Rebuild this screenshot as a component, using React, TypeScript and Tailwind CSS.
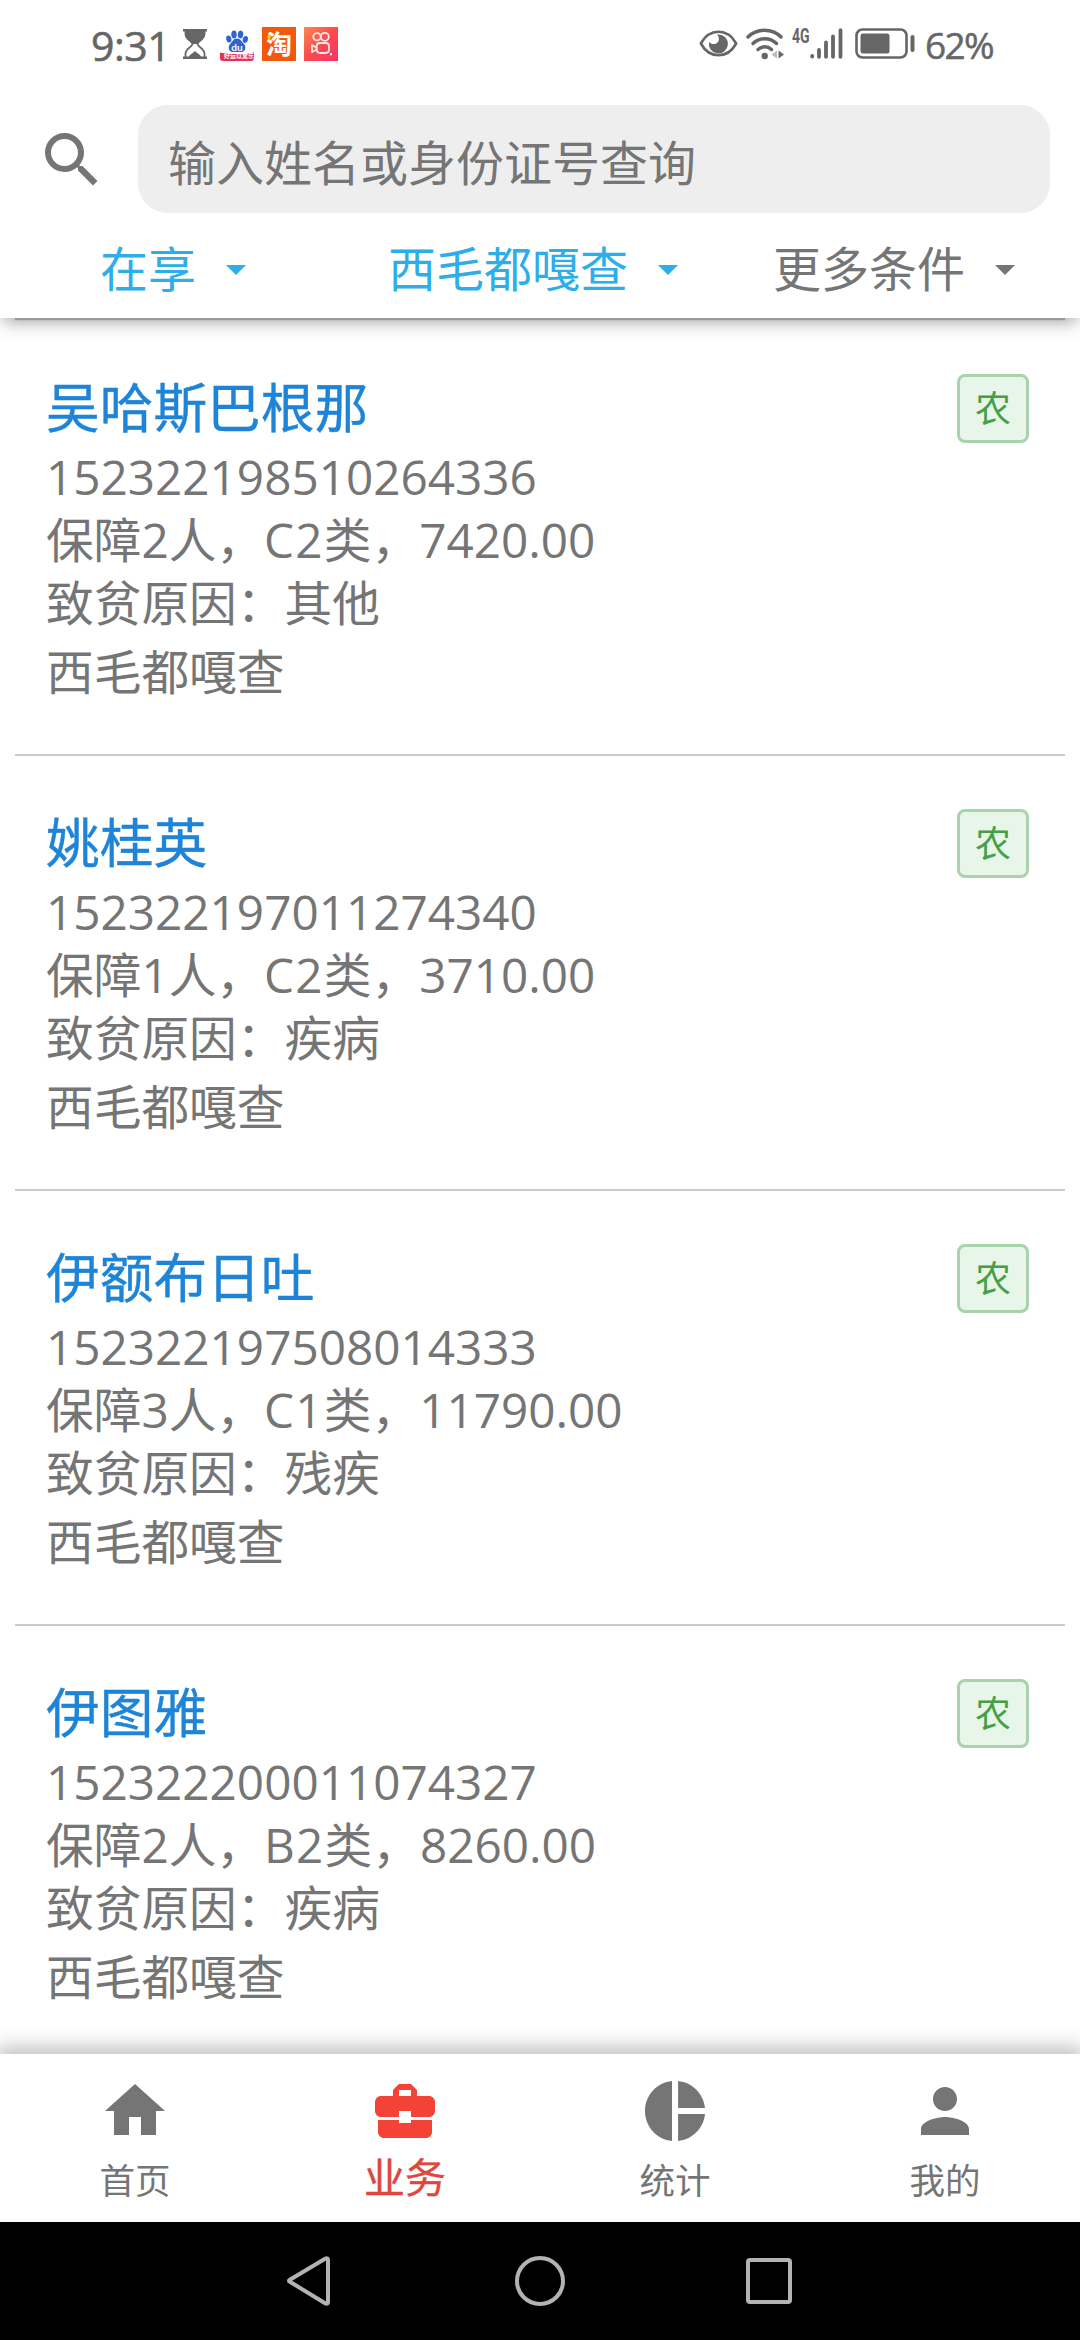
import React from 'react';

type Person = { name: string; id: string; count: number; level: string; amount: string; cause: string; village: string };

const people: Person[] = [
  { name: '吴哈斯巴根那', id: '152322198510264336', count: 2, level: 'C2', amount: '7420.00', cause: '其他', village: '西毛都嘎查' },
  { name: '姚桂英', id: '152322197011274340', count: 1, level: 'C2', amount: '3710.00', cause: '疾病', village: '西毛都嘎查' },
  { name: '伊额布日吐', id: '152322197508014333', count: 3, level: 'C1', amount: '11790.00', cause: '残疾', village: '西毛都嘎查' },
  { name: '伊图雅', id: '152322200011074327', count: 2, level: 'B2', amount: '8260.00', cause: '疾病', village: '西毛都嘎查' },
];

function Hourglass() {
  return (
    <svg className="h-[30px] w-6" viewBox="0 0 24 30" fill="none" stroke="#666" strokeWidth="1.800">
      <path d="M0 1.200h24M0 28.800h24" strokeWidth="2.400" />
      <path d="M2.500 1v4c0 6 7 7 7 10s-7 4-7 10v4M21.500 1v4c0 6-7 7-7 10s7 4 7 10v4" />
      <path d="M2.500 1h19v4c0 5-6 7-7.500 10h-4C8.500 12 2.500 10 2.500 5zM5.500 28.500c1-3 4-4 6.500-6.500 2.500 2.500 5.500 3.500 6.500 6.500z" fill="#666" stroke="none" />
    </svg>
  );
}

function Baidu() {
  return (
    <div className="relative h-[34px] w-[34px]">
      <svg className="h-[34px] w-[34px]" viewBox="0 0 34 34">
        <g fill="#2f63cf">
          <ellipse cx="8.800" cy="12" rx="2.600" ry="3.600" transform="rotate(-12 8.800 12)" />
          <ellipse cx="14" cy="7.500" rx="2.700" ry="3.900" />
          <ellipse cx="20.500" cy="7.500" rx="2.700" ry="3.900" transform="rotate(8 20.500 7.500)" />
          <ellipse cx="25.300" cy="12.500" rx="2.600" ry="3.600" transform="rotate(14 25.300 12.500)" />
          <path d="M17 11.500c-4 0-4.500 3.500-6.500 5-2.500 2-2.500 7.500 1.500 8.500h10c4-1 4.500-6 1.500-8.500-2-1.500-2.500-5-6.500-5z" />
        </g>
        <path d="M0 25.500c10 2 24 2 34 0V31c0 2-1 3-3 3H3c-2 0-3-1-3-3z" fill="#e5314f" />
      </svg>
      <span className="absolute top-[15px] left-0 w-full text-center font-['Lato'] text-[10px] leading-[10px] font-bold text-white">du</span>
      <span className="absolute top-[26px] left-[2px] w-full text-center text-[6px] leading-[7px] font-bold whitespace-nowrap text-white">好运以寓乐</span>
    </div>
  );
}

function Kuaishou() {
  return (
    <svg className="h-[34px] w-[34px]" viewBox="0 0 34 34">
      <defs>
        <linearGradient id="ks" x1="0" y1="0" x2="1" y2="1">
          <stop offset="0" stopColor="#f98a4c" />
          <stop offset=".5" stopColor="#fb4a4e" />
          <stop offset="1" stopColor="#f8336a" />
        </linearGradient>
      </defs>
      <rect width="34" height="34" fill="url(#ks)" />
      <g fill="none" stroke="#ffe9e6" strokeWidth="1.800" strokeLinejoin="round">
        <circle cx="13" cy="9.800" r="3.700" />
        <circle cx="20.800" cy="9.800" r="4" />
        <rect x="12.700" y="16" width="12.300" height="10" rx="3.200" />
        <path d="M12.700 20.800L8 18v7l4.700-2.500" />
      </g>
      <path d="M26 26h2v1.500l-1.500 1.500z" fill="#fff" />
    </svg>
  );
}

function Eye() {
  return (
    <svg className="h-[27px] w-[39px]" viewBox="0 0 39 27">
      <path d="M1.800 13.500C6 6 12 1.800 19.500 1.800S33 6 37.200 13.500C33 21 27 25.200 19.500 25.200S6 21 1.800 13.500z" fill="none" stroke="#666" strokeWidth="2.600" strokeLinejoin="round" />
      <path d="M19.500 4.500a9.500 9.500 0 1 1-9.300 7.200c1.500 2.800 6.500 3.300 8.600.6 1.800-2.400 1.500-5.600-.8-7.700z" fill="#666" />
    </svg>
  );
}

function Wifi() {
  return (
    <svg className="ml-2 h-8 w-[38px]" viewBox="0 0 38 32">
      <g fill="none" stroke="#666" strokeWidth="3.400" strokeLinecap="round">
        <path d="M2 9c9-9 24-9 33 0" />
        <path d="M7 15.500c6.500-6.300 17-6.300 23.500 0" />
        <path d="M12 21.500c4-3.600 9.500-3.600 13.500 0" />
      </g>
      <circle cx="18.700" cy="28" r="3.200" fill="#666" />
      <path d="M31 22.500v8l-5.500-4z" fill="#bbb" />
      <path d="M32.500 22.500v8l5.500-4z" fill="#666" />
    </svg>
  );
}

function Signal() {
  return (
    <svg className="h-[31px] w-[33px]" viewBox="0 0 33 31" stroke="#666" strokeWidth="3.800" strokeLinecap="round">
      <path d="M2.200 28v.6M9 22v6.800M16 14.500v14.300M23 8.500v20.300M30.500 2.200v26.600" />
    </svg>
  );
}

function Battery() {
  return (
    <svg className="h-[31px] w-[60px]" viewBox="0 0 60 31">
      <rect x="1.500" y="1.500" width="50" height="28" rx="6" fill="none" stroke="#666" strokeWidth="2.600" />
      <rect x="5.500" y="5.500" width="29" height="20" rx="2.500" fill="#666" />
      <rect x="55.500" y="7" width="4" height="17" rx="2" fill="#666" />
    </svg>
  );
}

function StatusBar() {
  return (
    <div className="flex h-[87px] shrink-0 items-center justify-between pr-[87px] pl-[91px] font-['Open_Sans','Noto_Sans_CJK_SC',sans-serif] text-[#666]">
      <div className="flex items-center">
        <span className="w-[92px] pt-[2px] text-[41px] leading-[50px] font-medium tracking-[-0.500px] [-webkit-text-stroke:0.6px_#666]">9:31</span>
        <Hourglass />
        <div className="ml-[13px] flex gap-2">
          <Baidu />
          <div className="relative flex h-[34px] w-[34px] items-center justify-center bg-[#f2590d] font-['Noto_Sans_CJK_SC'] text-[26px] leading-[34px] font-bold text-white">
            <span className="-mt-0.5">淘</span>
            <span className="absolute top-[8px] left-[5px] h-1 w-1 rounded-full bg-[#ffd800]" />
          </div>
          <Kuaishou />
        </div>
      </div>
      <div className="flex items-center">
        <Eye />
        <Wifi />
        <span className="ml-2 w-[17px] -translate-y-2 font-['Roboto'] text-[20px] leading-5 font-bold">
          <span className="inline-block origin-left scale-x-70">4G</span>
        </span>
        <span className="ml-px"><Signal /></span>
        <span className="ml-3"><Battery /></span>
        <span className="ml-2.5 w-[68px] pt-[2px] text-[37px] leading-[50px] font-medium tracking-[-1.700px] [-webkit-text-stroke:0.5px_#666]">62%</span>
      </div>
    </div>
  );
}

function Filter({ label, active }: { label: string; active?: boolean }) {
  return (
    <button className={active ? 'flex items-center text-[#2eaee8]' : 'flex items-center text-[#757575]'}>
      <span className="-mt-[3px] text-[48px] leading-[72px]">{label}</span>
      <svg className="ml-[30px] h-[10px] w-5" viewBox="0 0 20 10" fill="currentColor">
        <path d="M0 0h20L10 10z" />
      </svg>
    </button>
  );
}

function Header() {
  return (
    <header className="relative z-10 h-[231px] shrink-0 bg-white shadow-[0_17px_1px_-15px_#999,0_7px_16px_-3px_rgba(0,0,0,0.36)] [clip-path:inset(0_0_-32px_0)]">
      <div className="flex pt-[18px] pr-[30px] pl-9">
        <svg className="mt-[19px] h-[72px] w-[72px] shrink-0" viewBox="0 0 24 24" fill="#757575">
          <path d="M15.500 14h-.79l-.28-.27A6.471 6.471 0 0 0 16 9.500 6.500 6.500 0 1 0 9.500 16c1.610 0 3.090-.59 4.230-1.570l.27.28v.79l5 4.990L20.490 19l-4.990-5zm-6 0C7.010 14 5 11.990 5 9.500S7.010 5 9.500 5 14 7.010 14 9.500 11.990 14 9.500 14z" />
        </svg>
        <div className="ml-[30px] flex h-[108px] flex-1 items-center rounded-[30px] bg-[#eee] pt-2 pl-[30px] text-[48px] leading-[72px] text-[#757575]">
          输入姓名或身份证号查询
        </div>
      </div>
      <div className="flex h-[72px] items-center pt-[42px] pl-[100px]">
        <div className="w-[288px]"><Filter label="在享" active /></div>
        <div className="w-[385px]"><Filter label="西毛都嘎查" active /></div>
        <Filter label="更多条件" />
      </div>
    </header>
  );
}

function PersonCard({ person }: { person: Person }) {
  return (
    <li className="mx-[15px] flex h-[435px] items-start justify-between border-b-2 border-[#cacaca] pt-[51px] pr-9 pl-[31px]">
      <div className="text-[47.700px] leading-[63px] text-[#757575]">
        <h2 className="mb-px text-[53.700px] leading-[72px] text-[#1e84d8] [-webkit-text-stroke:0.4px_#1e84d8]">{person.name}</h2>
        <p>{person.id}</p>
        <p>
          保障{person.count}人，<span className="tracking-[1.200px]">{person.level}</span>类，{person.amount}
        </p>
        <p>致贫原因：{person.cause}</p>
        <p className="mt-[6px]">{person.village}</p>
      </div>
      <span className="mt-[2px] flex h-[69px] w-[72px] items-center justify-center rounded-[8px] border-3 border-[#a9d3ab] bg-[#e8f5e9] text-[36px] leading-[50px] text-[#43a047]">
        农
      </span>
    </li>
  );
}

const tabs = [
  { label: '首页', d: 'M10 20v-6h4v6h5v-8h3L12 3 2 12h3v8z' },
  {
    label: '业务',
    active: true,
    d: 'M10 16v-1H3.010L3 19c0 1.110.89 2 2 2h14c1.110 0 2-.89 2-2v-4h-7v1h-4zm10-9h-4.010V5l-2-2h-4l-2 2v2H4c-1.100 0-2 .9-2 2v3c0 1.110.89 2 2 2h6v-2h4v2h6c1.100 0 2-.9 2-2V9c0-1.100-.9-2-2-2zm-6 0h-4V5h4v2z',
  },
  {
    label: '统计',
    d: 'M11 2v20c-5.070-.5-9-4.790-9-10s3.930-9.500 9-10zm2.030 0v8.990H22c-.47-4.740-4.240-8.520-8.970-8.990zm0 11.010V22c4.740-.47 8.500-4.250 8.970-8.990h-8.970z',
  },
  {
    label: '我的',
    d: 'M12 12c2.210 0 4-1.790 4-4s-1.790-4-4-4-4 1.790-4 4 1.790 4 4 4zm0 2c-2.670 0-8 1.340-8 4v2h16v-2c0-2.660-5.330-4-8-4z',
  },
];

function TabBar() {
  return (
    <nav className="relative z-10 grid h-[168px] shrink-0 grid-cols-4 bg-white shadow-[0_-4px_18px_4px_rgba(0,0,0,0.23)]">
      {tabs.map((t) => (
        <div key={t.label} className={t.active ? 'flex flex-col items-center pt-[21px] text-[#f44336]' : 'flex flex-col items-center pt-[21px] text-[#757575]'}>
          <svg className="h-[72px] w-[72px]" viewBox="0 0 24 24" fill="currentColor">
            <path d={t.d} />
          </svg>
          <span className={t.active ? 'mt-[3px] text-[41px] leading-[54px] text-[#e0463c] [-webkit-text-stroke:0.4px_#e0463c]' : 'mt-[6px] text-[35.500px] leading-[54px]'}>{t.label}</span>
        </div>
      ))}
    </nav>
  );
}

function SystemNav() {
  return (
    <div className="relative z-20 flex h-[118px] shrink-0 items-center bg-black pl-[285px]">
      <svg className="h-[52px] w-[48px]" viewBox="0 0 48 52" fill="none" stroke="#b3b3b3" strokeWidth="4" strokeLinejoin="round">
        <path d="M4.500 26.500Q3.500 26 4.500 25L40.500 3.500Q43 2.500 43 5v42Q43 49.500 40.500 48.500z" />
      </svg>
      <span className="ml-[182px] h-[50px] w-[50px] rounded-full border-4 border-[#b3b3b3]" />
      <span className="ml-[181px] h-[46px] w-[46px] rounded-[4px] border-4 border-[#b3b3b3]" />
    </div>
  );
}

export default function App() {
  return (
    <div className="flex h-[2340px] w-[1080px] flex-col overflow-hidden bg-white font-['Open_Sans','Noto_Sans_CJK_SC',sans-serif]">
      <StatusBar />
      <Header />
      <ul className="h-[1736px] shrink-0 overflow-hidden pt-[3px]">
        {people.map((p) => (
          <PersonCard key={p.id} person={p} />
        ))}
      </ul>
      <TabBar />
      <SystemNav />
    </div>
  );
}
